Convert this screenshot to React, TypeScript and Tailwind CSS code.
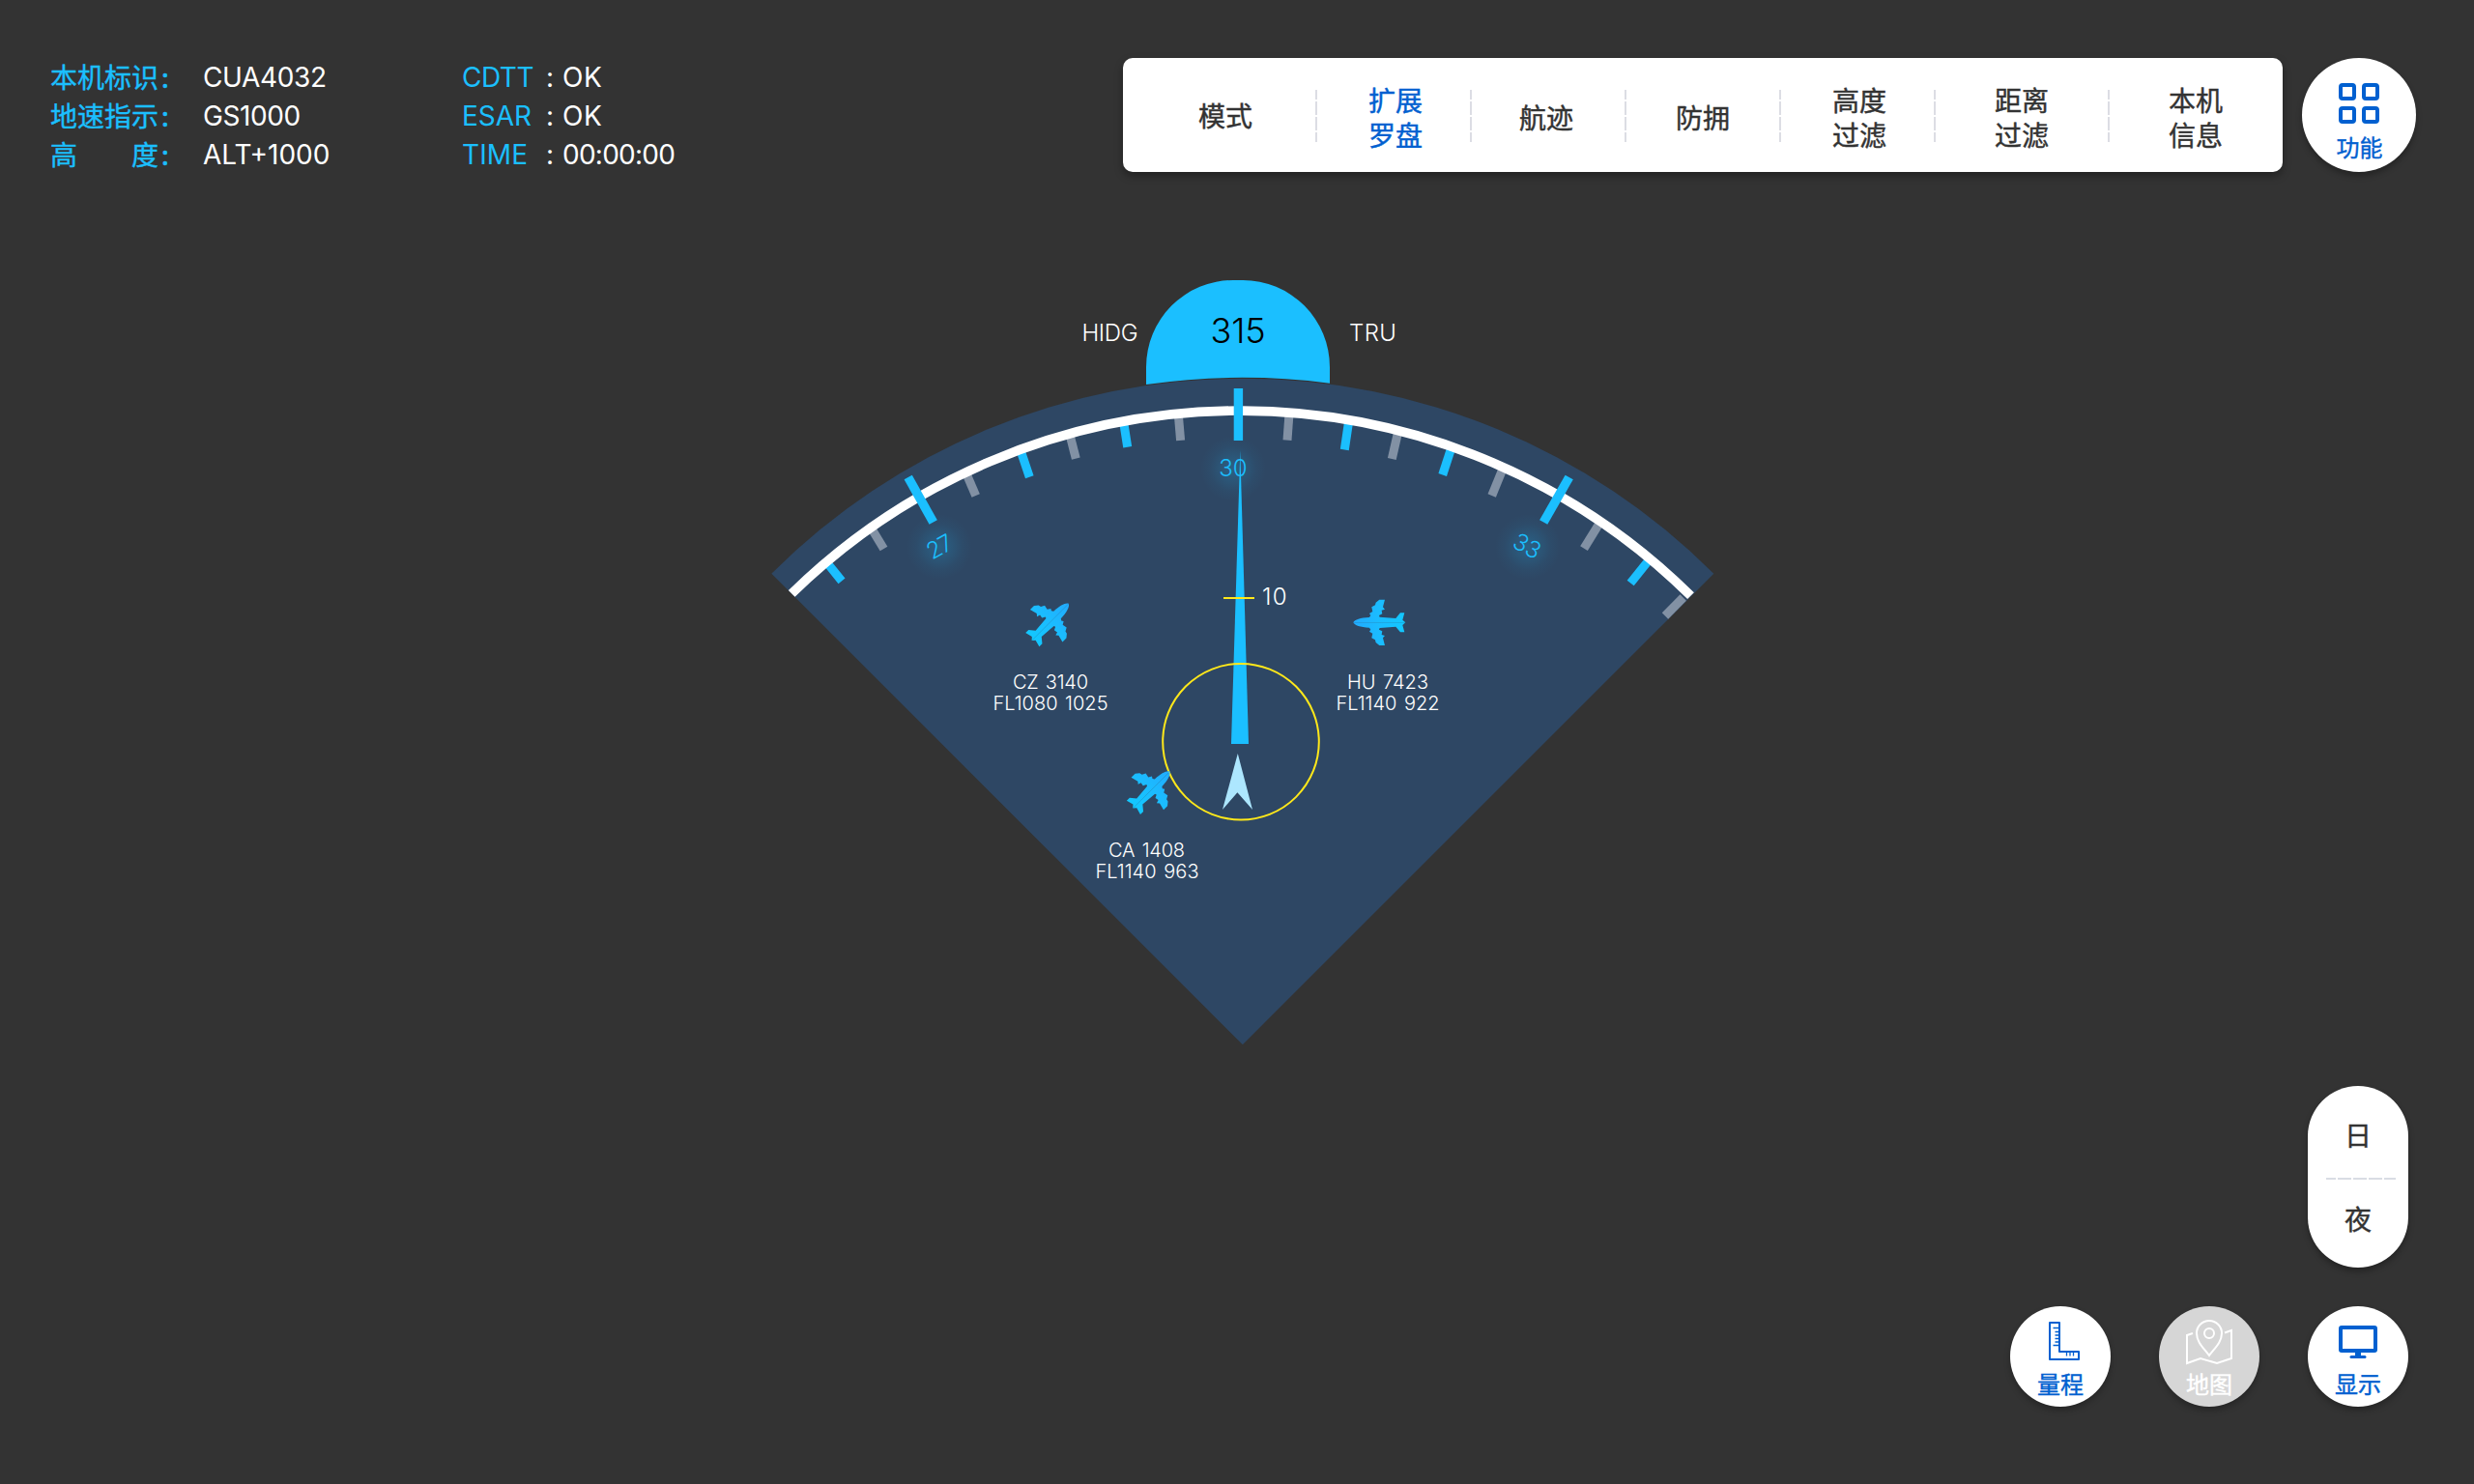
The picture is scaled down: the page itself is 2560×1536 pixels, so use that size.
import type { ReactNode } from "react";

type Tick = [number, number, number, number];

const BLUE_TICKS: Tick[] = [
  [857, 584, 871, 601.3],
  [1056.5, 467.5, 1065.3, 493.7],
  [1163, 439, 1166.7, 462.7],
  [1395.5, 437, 1391.3, 465.5],
  [1501.5, 464.5, 1492.7, 491.5],
  [1706, 580, 1687.2, 603.5],
];

const GRAY_TICKS: Tick[] = [
  [903, 549, 914.5, 568],
  [1000.5, 491.5, 1009.7, 513],
  [1107.5, 452, 1113.3, 474.7],
  [1219.6, 432.3, 1221.6, 455.8],
  [1333.8, 431, 1332, 455.7],
  [1446.2, 449, 1440.3, 475],
  [1554.5, 486.5, 1543.7, 513],
  [1654.5, 542.5, 1639, 567.7],
  [1741.7, 618.5, 1723, 637.5],
];

const MAJOR_TICKS: Tick[] = [
  [939.7, 494, 965.7, 540.5],
  [1281.4, 402, 1281.4, 456],
  [1623.7, 494, 1597.2, 540.5],
];

const HALF_PLANE =
  "M0 0C4 -9 22 -15 50 -16L54 -22L50 -28L60 -34L57 -48L68 -54L70 -62L81 -71L98 -71L92 -48L98 -41L88 -38L90 -27L80 -22L82 -17L132 -13L146 -30L159 -30L153 -8L162 0Z";

function Plane({ x, y, angle = 0 }: { x: number; y: number; angle?: number }) {
  return (
    <g transform={`translate(${x} ${y}) rotate(${angle}) scale(0.3333) translate(-81 0)`} fill="url(#plane)">
      <path d={HALF_PLANE} />
      <path d={HALF_PLANE} transform="scale(1 -1)" />
    </g>
  );
}

function Label({ x, y, w, children, size = 20 }: { x: number; y: number; w: number; children: string; size?: number }) {
  return (
    <text x={x} y={y} textLength={w} fontSize={size} fill="#fff" wordSpacing={2}>
      {children}
    </text>
  );
}

function Dial() {
  return (
    <svg
      viewBox="780 280 1010 810"
      className="ml-[780px] mt-[102px] block h-[810px] w-[1010px] shrink-0"
      fontFamily="Inter, 'Liberation Sans', sans-serif"
      fontWeight={300}
    >
      <defs>
        <radialGradient id="glow">
          <stop offset="0" stopColor="#1bbfff" stopOpacity="0.22" />
          <stop offset="0.4" stopColor="#1bbfff" stopOpacity="0.12" />
          <stop offset="0.7" stopColor="#1bbfff" stopOpacity="0.04" />
          <stop offset="1" stopColor="#1bbfff" stopOpacity="0" />
        </radialGradient>
        <linearGradient id="plane">
          <stop offset="0" stopColor="#22abff" />
          <stop offset="0.5" stopColor="#1bbcff" />
          <stop offset="1" stopColor="#12c8ff" />
        </linearGradient>
      </defs>

      <path d="M1186 398V380A90 90 0 0 1 1276 290H1286A90 90 0 0 1 1376 380V396.7A691 691 0 0 0 1186 398Z" fill="#1bbfff" />
      <text x="1252.5" y="354.5" textLength="57" fontSize="36" fontWeight={350} fill="#000">315</text>
      <Label x={1119.5} y={352.5} w={58} size={24}>HIDG</Label>
      <Label x={1396} y={352.5} w={49} size={24}>TRU</Label>

      <path d="M1285.8 1081.2L798.3 593.7A689.4 689.4 0 0 1 1773.3 593.7Z" fill="#2e4764" />

      <g strokeWidth="9" fill="none">
        {GRAY_TICKS.map(([x1, y1, x2, y2]) => (
          <line key={x1} x1={x1} y1={y1} x2={x2} y2={y2} stroke="#8291a4" />
        ))}
        {BLUE_TICKS.map(([x1, y1, x2, y2]) => (
          <line key={x1} x1={x1} y1={y1} x2={x2} y2={y2} stroke="#1bbfff" />
        ))}
        <path d="M819.2 614.4A663.2 663.2 0 0 1 1749.5 616.7" stroke="#fff" strokeWidth="9.6" />
        {MAJOR_TICKS.map(([x1, y1, x2, y2]) => (
          <line key={x1} x1={x1} y1={y1} x2={x2} y2={y2} stroke="#1bbfff" strokeWidth="9.4" />
        ))}
      </g>

      <circle cx="1276" cy="485" r="34" fill="url(#glow)" />
      <circle cx="972" cy="566" r="34" fill="url(#glow)" />
      <circle cx="1581" cy="566" r="34" fill="url(#glow)" />
      <g fontSize="24" fill="#1bbfff">
        <text x="1261.2" y="493.4" textLength="29.5">30</text>
        <text transform="translate(972.2 565.6) rotate(-29)" x="-13.5" y="8.7" textLength="27">27</text>
        <text transform="translate(1580.3 564.9) rotate(29)" x="-14.5" y="8.7" textLength="29">33</text>
      </g>

      <path d="M1283.3 466L1292 770H1274Z" fill="#1bbfff" />
      <path d="M1266 619H1298" stroke="#ffe81a" strokeWidth="2" />
      <circle cx="1284" cy="767.7" r="80.8" fill="none" stroke="#ffe81a" strokeWidth="2" />
      <path d="M1280.8 780L1296 838L1280.4 820.3L1265 838Z" fill="#ade7ff" />
      <Label x={1306} y={625.5} w={25.5} size={24}>10</Label>

      <Plane x={1427.3} y={644.3} />
      <Plane x={1086.7} y={643.8} angle={135} />
      <Plane x={1191.3} y={817.5} angle={135} />

      <Label x={1048} y={713.2} w={78}>CZ 3140</Label>
      <Label x={1027.5} y={735.2} w={119}>FL1080 1025</Label>
      <Label x={1147} y={887.2} w={79}>CA 1408</Label>
      <Label x={1133.5} y={909.2} w={107}>FL1140 963</Label>
      <Label x={1394} y={713.2} w={84}>HU 7423</Label>
      <Label x={1382.5} y={735.2} w={107}>FL1140 922</Label>
    </svg>
  );
}

const LATIN = "font-['Inter','Liberation_Sans',sans-serif]";

function Info() {
  const rows = [
    ["本机标识", "CUA4032", "CDTT", "OK", "tracking-[-0.35px]", "tracking-[-0.5px]", "tracking-[0.6px]"],
    ["地速指示", "GS1000", "ESAR", "OK", "tracking-[-0.4px]", "tracking-[0px]", "tracking-[0.6px]"],
    ["高度", "ALT+1000", "TIME", "00:00:00", "tracking-[0px]", "tracking-[0.1px]", "tracking-[-0.75px]"],
  ];
  return (
    <div className="ml-[52px] text-[28px] leading-[40px] text-white">
      {rows.map(([label, value, key, state, valueTrack, keyTrack, stateTrack]) => (
        <div key={key} className="flex h-10 items-center whitespace-nowrap">
          <span className="-mt-[3px] flex w-28 justify-between text-[#1bbfff] [-webkit-text-stroke:0.4px_currentColor]">
            {label.split("").map((c) => (
              <span key={c}>{c}</span>
            ))}
          </span>
          <span className="-mt-[3px] w-[46px] pl-[3px] text-[#1bbfff] [-webkit-text-stroke:0.6px_currentColor]">:</span>
          <span className={`w-[268px] ${LATIN} ${valueTrack}`}>{value}</span>
          <span className={`w-[87px] ${LATIN} ${keyTrack} text-[#1bbfff]`}>{key}</span>
          <span className={`w-[17px] ${LATIN}`}>:</span>
          <span className={`${LATIN} ${stateTrack}`}>{state}</span>
        </div>
      ))}
    </div>
  );
}

const MENU = [
  { lines: ["模式"], box: "w-[200px] pl-[12px]" },
  { lines: ["扩展", "罗盘"], box: "w-[160px] pl-1 pt-[3px] text-[#0060d0]" },
  { lines: ["航迹"], box: "w-[160px] pr-1 pt-1" },
  { lines: ["防拥"], box: "w-[160px] pt-1" },
  { lines: ["高度", "过滤"], box: "w-[160px] pl-1 pt-[3px]" },
  { lines: ["距离", "过滤"], box: "w-[180px] pt-[3px]" },
  { lines: ["本机", "信息"], box: "w-[180px] pt-[3px]" },
];

function Menu() {
  return (
    <nav className="flex h-[118px] w-[1200px] items-center rounded-[10px] bg-white text-[28px] leading-[36px] text-[#333] shadow-[0_4px_8px_rgba(0,0,0,0.35)] [-webkit-text-stroke:0.45px_currentColor]">
      {MENU.map(({ lines, box }, i) => (
        <div key={i} className="flex items-center">
          {i > 0 && (
            <div className="-mx-px mt-[2px] flex h-[54px] w-[2px] flex-col gap-[2px]">
              {["h-[10px]", "h-[14px]", "h-[14px]", "h-[10px]"].map((h, j) => (
                <span key={j} className={`${h} w-full bg-[#dcdde4]`} />
              ))}
            </div>
          )}
          <div className={`${box} flex flex-col items-center`}>
            {lines.map((l) => (
              <span key={l}>{l}</span>
            ))}
          </div>
        </div>
      ))}
    </nav>
  );
}

function RoundButton({ label, tone, children }: { label: string; tone: string; children: ReactNode }) {
  return (
    <button className={`flex size-[104px] flex-col items-center rounded-full pt-3 text-[24px] leading-[36px] shadow-[0_4px_6px_rgba(0,0,0,0.25)] [-webkit-text-stroke:0.4px_currentColor] ${tone}`}>
      <span className="flex h-[50px] items-start">{children}</span>
      <span>{label}</span>
    </button>
  );
}

export default function App() {
  return (
    <div className="flex h-[1536px] w-[2560px] flex-col overflow-hidden bg-[#333] font-['Noto_Sans_CJK_SC',sans-serif]">
      <header className="flex h-[178px] shrink-0 justify-between pr-[60px] pt-[60px]">
        <Info />
        <div className="flex gap-5">
          <Menu />
          <button className="flex size-[118px] flex-col items-center rounded-full bg-white pt-[26px] text-[24px] leading-[36px] text-[#0060d0] shadow-[0_4px_6px_rgba(0,0,0,0.3)] [-webkit-text-stroke:0.4px_currentColor]">
            <span className="grid grid-cols-2 gap-[6px]">
              {[0, 1, 2, 3].map((i) => (
                <span key={i} className="size-[18px] rounded-[4px] border-4 border-[#0060d0]" />
              ))}
            </span>
            <span className="mt-[6px] pl-px">功能</span>
          </button>
        </div>
      </header>

      <Dial />

      <footer className="mr-[68px] mt-[34px] flex flex-col items-end gap-10">
        <div className="flex h-[188px] w-[104px] flex-col items-center rounded-full bg-white pt-[30px] text-[28px] leading-[40px] text-[#333] shadow-[0_4px_6px_rgba(0,0,0,0.3)] [-webkit-text-stroke:0.45px_currentColor]">
          <span>日</span>
          <span className="ml-[6px] mt-[25px] flex h-[2px] w-[72px] gap-[2px]">
            {["w-[10px]", "w-[14px]", "w-[14px]", "w-[14px]", "w-[12px]"].map((w, i) => (
              <span key={i} className={`${w} h-full bg-[#d9dde4]`} />
            ))}
          </span>
          <span className="mt-[20px]">夜</span>
        </div>

        <div className="flex gap-[50px]">
          <RoundButton label="量程" tone="bg-white text-[#0060d0]">
            <svg viewBox="0 0 32 40" className="ml-2 mt-1 h-10 w-8" fill="none" stroke="currentColor" strokeWidth="2">
              <path d="M1 1H11V31H31V39H1Z" strokeLinejoin="round" />
              <path d="M4.5 6.5H11M6.5 10.5H11M6.5 14H11M6.5 17.5H11M6.5 21H11M4.5 24.5H11M18.5 31V35.5M22 31V35.5M25.5 31V35.5" strokeWidth="1.3" />
            </svg>
          </RoundButton>
          <RoundButton label="地图" tone="bg-[#d6d6d6] text-white">
            <svg viewBox="0 0 50 48" className="mt-[1px] h-12 w-[50px]" fill="none" stroke="currentColor" strokeWidth="2">
              <path d="M25 38C20 31 12 24.500 12 15A13 13 0 0 1 38 15C38 24.500 30 31 25 38Z" />
              <circle cx="25" cy="15" r="5" />
              <path d="M8 15L2 17V46L16 41L33 46L48 41V12L41 14.500" />
            </svg>
          </RoundButton>
          <RoundButton label="显示" tone="bg-white text-[#0060d0]">
            <svg viewBox="0 0 40 34" className="mt-2 h-[34px] w-10" fill="none" stroke="currentColor">
              <rect x="2" y="2" width="36" height="24" rx="1" strokeWidth="4" />
              <path d="M20 27V32" strokeWidth="6" />
              <path d="M13 32.500H27" strokeWidth="3" strokeLinecap="round" />
            </svg>
          </RoundButton>
        </div>
      </footer>
    </div>
  );
}
